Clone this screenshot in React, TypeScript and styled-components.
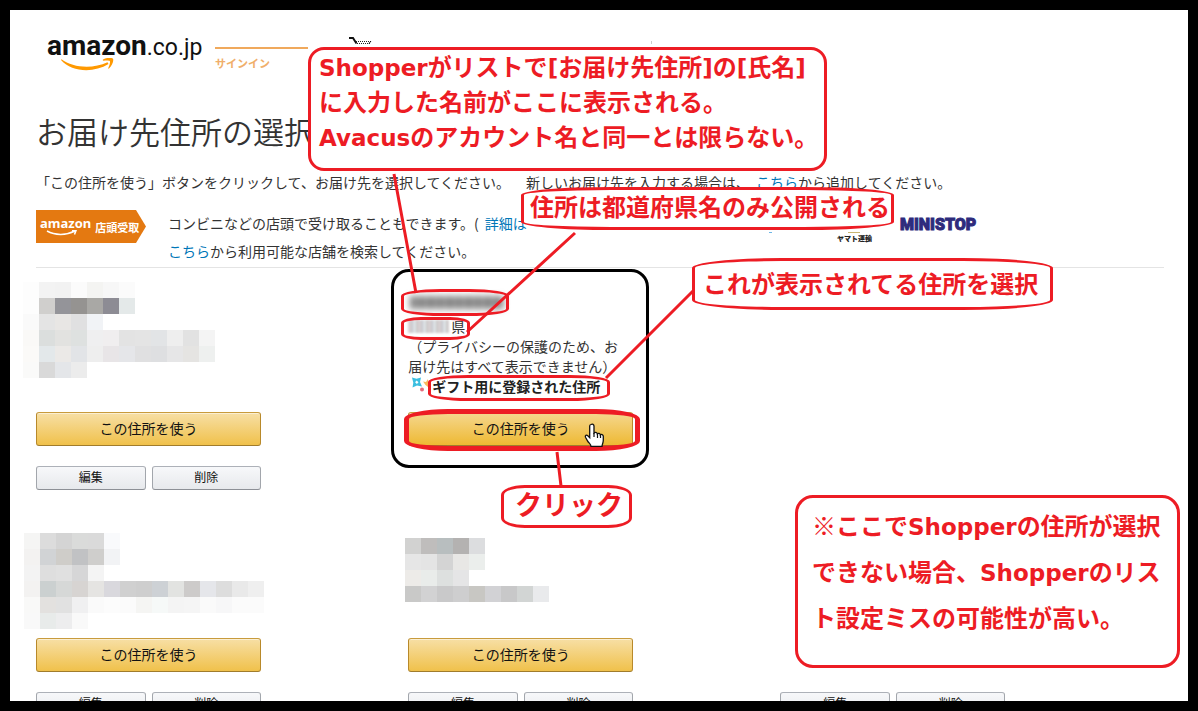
import React from 'react';
import styled, { createGlobalStyle } from 'styled-components';

const RED = '#ed1c24';

const GlobalStyle = createGlobalStyle`
  *, *::before, *::after { box-sizing: border-box; }
  body {
    margin: 0;
    background: #000;
    color: #333;
    font: 400 14px/20px "Noto Sans CJK JP", sans-serif;
  }
  h1, p { margin: 0; }
  button { font: inherit; }
`;

const Page = styled.div`
  position: relative;
  height: 100vh;
  padding: 10px;
  overflow: hidden;
  background: #000;
`;

const Sheet = styled.main`
  height: 100%;
  padding: 0 24px 0 26px;
  overflow: hidden;
  background: #fff;
`;

const Header = styled.header`
  display: flex;
  align-items: flex-start;
  height: 98px;
  padding: 20px 0 0 11px;
`;

const Logo = styled.a`
  display: flex;
  flex-direction: column;
  width: 156px;
  color: #111;
  text-decoration: none;
  white-space: nowrap;
`;

const LogoText = styled.span`
  font: 23px/32px Roboto, sans-serif;
  b { font-size: 28px; }
`;

const Smile = styled.svg`
  display: block;
  margin: -6px 0 0 14px;
`;

const SignInStep = styled.div`
  width: 93px;
  margin: 17px 40px 0 12px;
  padding-top: 4px;
  border-top: 2px solid #f0a95c;
  color: #f0ae6a;
  font-size: 11px;
  font-weight: 700;
`;

const CartIcon = styled.svg`
  margin-top: 7px;
`;

const Tick = styled.span`
  width: 1px;
  height: 3px;
  margin: 11px 0 0 279px;
  background: #ccc;
`;

const Title = styled.h1`
  font-size: 31px;
  line-height: 46px;
  font-weight: 350;
  white-space: nowrap;
`;

const Lead = styled.p`
  display: flex;
  gap: 16px;
  margin: 18px 0;
  white-space: nowrap;
`;

const TextLink = styled.a<{ $spaced?: boolean }>`
  padding-left: ${(p) => (p.$spaced ? 6 : 0)}px;
  color: #0077b8;
  text-decoration: none;
`;

const Pickup = styled.section`
  display: grid;
  grid-template-columns: 132px 600px 1fr;
  height: 58px;
  border-bottom: 1px solid #e4e4e4;
`;

const Badge = styled.div`
  display: flex;
  align-items: center;
  gap: 4px;
  width: 110px;
  height: 33px;
  padding-left: 4px;
  background: #e47911;
  clip-path: polygon(0 0, 100px 0, 100% 50%, 100px 100%, 0 100%);
  color: #fff;
  font-size: 11px;
  font-weight: 700;
  white-space: nowrap;
`;

const BadgeLogo = styled.span`
  display: flex;
  flex-direction: column;
  font: 700 13px/13px "Noto Sans", sans-serif;
  svg { display: block; margin-left: 6px; }
`;

const PickupText = styled.p`
  margin-top: -1px;
  line-height: 28px;
`;

const Brands = styled.div`
  display: flex;
  align-items: flex-start;
`;

const BlueMark = styled.span`
  width: 3px;
  height: 1px;
  margin: 22px 65px 0 1px;
  background: #6db6e6;
`;

const Yamato = styled.span`
  width: 63px;
  margin-top: 22px;
  color: #222;
  font-size: 7px;
  line-height: 10px;
  font-weight: 900;
  svg { display: block; margin-left: 11px; }
`;

const Ministop = styled.span`
  margin-top: 5px;
  color: #2e2b7c;
  font: 900 16px/20px Roboto, "Liberation Sans", sans-serif;
  -webkit-text-stroke: 1px #2e2b7c;
`;

const Cards = styled.section`
  display: grid;
  grid-template-columns: repeat(3, 33%);
  grid-auto-rows: 226px;
`;

const Card = styled.article`
  display: flex;
  flex-direction: column;
  width: 225px;
`;

const Address = styled.div`
  height: 144px;
  flex: none;
  white-space: nowrap;
`;

const ButtonSpace = styled.div`
  flex: none;
  height: 34px;
`;

const PrimaryButton = styled.button<{ $hover?: boolean }>`
  flex: none;
  height: 34px;
  padding: 0 0 2px;
  border: 1px solid;
  border-color: #c89b3c #b8892a #a07c2c;
  border-radius: 3px;
  background: ${(p) =>
    p.$hover
      ? 'linear-gradient(#f5d78e, #eeb933)'
      : 'linear-gradient(#f7dfa5, #f0c14b)'};
  box-shadow: inset 0 1px 0 rgba(255, 255, 255, 0.5);
  color: #111;
  cursor: pointer;
`;

const ButtonPair = styled.div`
  display: grid;
  grid-template-columns: 1fr 1fr;
  gap: 6px;
  margin-top: 20px;
`;

const SmallButton = styled.button`
  height: 24px;
  padding: 0 0 2px;
  border: 1px solid;
  border-color: #adb1b8 #a2a6ac #8d9096;
  border-radius: 3px;
  background: linear-gradient(#f7f8fa, #e7e9ec);
  color: #111;
  font-size: 12px;
  line-height: 20px;
  cursor: pointer;
`;

const MosaicArt = styled.svg<{ $top: number; $left: number }>`
  display: block;
  margin: ${(p) => p.$top}px 0 0 ${(p) => -p.$left}px;
`;

const HiddenName = styled.div`
  width: 94px;
  height: 13px;
  margin: 28px 0 7px 2px;
  background: repeating-linear-gradient(90deg, #777 0 5px, #aaa 5px 9px, #666 9px 12px, #999 12px 19px);
  filter: blur(3px);
`;

const Prefecture = styled.div`
  display: flex;
  align-items: center;
  gap: 2px;
`;

const HiddenPrefecture = styled.span`
  width: 41px;
  height: 13px;
  background: repeating-linear-gradient(90deg, #d8d0d2 0 3px, #c8c8cd 3px 5px, #dde2e6 5px 8px, #ccc9c9 8px 10px);
  filter: blur(1px);
`;

const GiftLine = styled.div`
  display: flex;
  align-items: center;
  color: #222;
  font-weight: 700;
  svg { flex: none; }
`;

const Overlay = styled.div`
  position: absolute;
  inset: 0;
  pointer-events: none;
`;

const Outline = styled.div<{
  $x: number; $y: number; $w: number; $h: number;
  $r: string; $line?: number; $color?: string; $fill?: boolean;
}>`
  position: absolute;
  left: ${(p) => p.$x}px;
  top: ${(p) => p.$y}px;
  width: ${(p) => p.$w}px;
  height: ${(p) => p.$h}px;
  border: ${(p) => p.$line ?? 3}px solid ${(p) => p.$color ?? RED};
  border-radius: ${(p) => p.$r};
  background: ${(p) => (p.$fill ? '#fff' : 'transparent')};
`;

const Note = styled(Outline)<{ $lh: number; $pad: string; $size?: number }>`
  padding: ${(p) => p.$pad};
  color: ${RED};
  font-size: ${(p) => p.$size ?? 24}px;
  line-height: ${(p) => p.$lh}px;
  font-weight: 700;
  white-space: nowrap;
  p { margin-top: -2px; }
`;

const Latin = styled.span`
  font-family: "DejaVu Sans", sans-serif;
  font-size: 23px;
  line-height: 1;
`;

const Pointers = styled.svg`
  position: absolute;
  inset: 0;
  width: 100%;
  height: 100%;
`;

function Mosaic({ rows, top, left }: { rows: string[]; top: number; left: number }) {
  const cells = rows.map((r) => r.split(' '));
  const cols = Math.max(...cells.map((r) => r.length));
  return (
    <MosaicArt $top={top} $left={left} width={cols * 16} height={rows.length * 16} shapeRendering="crispEdges" aria-hidden="true">
      {cells.map((r, y) =>
        r.map((c, x) => <rect key={`${x}-${y}`} x={x * 16} y={y * 16} width="16" height="16" fill={`#${c}`} />),
      )}
    </MosaicArt>
  );
}

const mosaicA = [
  'fdfdfd f3f3f3 f2f2f2 fbfbfb f4f4f2 f7f7f7 fbfbfb',
  'fdfdfd d0cfcd 949499 959391 a9a8a5 8d8c94 e4e9e9',
  'fafafa e4e4e4 e8e6e4 e0e0e1 f1f3f6',
  'faf9f7 dbdedd e2e2e0 dee1e0 efeff0 f0eeef e3e3e3 e4e4e4 e2e4e6 eeeeee e2e2e2 f4f4f4',
  'fbfaf8 e3e8ea ebe9e7 e2e4e7 eeeeee e8e5e7 e5e6e9 e0e0e1 dedfe1 e6e6e7 e5e4e2 eef0ef',
  'fafaf9 d9d9d9 e4e6e9 ececec',
];
const mosaicB = [
  'f5f5f4 dcdcdc d4d4d4 dadbda dadada f9fafc',
  'f3f2f1 d1d3d5 cfcdc9 c1c2c4 cfcecc f2f3f5',
  'f3f3f3 dedede e0e0e0 d6d6d7 f4f4f4',
  'f3f2f1 cbd0d0 d6d8d7 d7d4d2 e5e4e2 d9d8dd d0d0d0 cecece cdd1d5 e2e3e1 cdcbca e5e6ea dddddd e9e9e9 efefef',
  'f9f9f8 e3e1df e1e1e1 f0f0f1 fafafa fcfcfc fbfbfb f5f5f3 f6f9f8 f4f4f4 f5f5f5 fafafa f7f7f8 fbfbfb fbfbfb',
  'f9f9f9 e8ebea ededee f9f9f9',
];
const mosaicC = [
  'd2d2d1 bfbdbc b8bebf b4b2b1 dcdddf',
  'e6e6e6 e4e4e4 d4d4d4 e8e7e5 ebeeec',
  'edebe8 e9ecea dde0df e5e5e6',
  'c9c9c8 d2d2d3 c9c9ca cececf c8c7c3 d2d2d5 c8c8c9 d2d5d4 e9eaec',
];

const EditDelete = () => (
  <ButtonPair>
    <SmallButton type="button">編集</SmallButton>
    <SmallButton type="button">削除</SmallButton>
  </ButtonPair>
);

export default function App() {
  return (
    <Page lang="ja">
      <GlobalStyle />
      <Sheet>
        <Header>
          <Logo href="#">
            <LogoText><b>amazon</b>.co.jp</LogoText>
            <Smile width="56" height="14" viewBox="0 0 56 14" aria-hidden="true">
              <path d="M.5 1.200C12 10 32 11 46.500 4.200l1 1.800C33 15 11 14.500 0 2z" fill="#f90" />
              <path d="M42 1.500C46-.8 51-.5 52 .8c1 1.700-.8 7-4 9.700-.5.400-.9.100-.7-.4 1-2.300 2.300-6 1.500-7-.8-1-4.400-.5-6.300-.4-.8 0-.9-.8-.5-1.200z" fill="#f90" />
            </Smile>
          </Logo>
          <SignInStep>サインイン</SignInStep>
          <CartIcon width="24" height="8" viewBox="0 0 24 8" aria-hidden="true">
            <path d="M1 1h4l3.500 5.500" fill="none" stroke="#111" strokeWidth="2" />
            <path d="M8 4.500h15M9 6.500h13" stroke="#222" strokeDasharray="1 1" />
            <path d="M21 6.500l2-2.500" stroke="#111" />
          </CartIcon>
          <Tick />
        </Header>
        <Title>お届け先住所の選択</Title>
        <Lead>
          <span>「この住所を使う」ボタンをクリックして、お届け先を選択してください。</span>
          <span>新しいお届け先を入力する場合は、<TextLink href="#" $spaced>こちら</TextLink>から追加してください。</span>
        </Lead>
        <Pickup>
          <Badge>
            <BadgeLogo>
              amazon
              <svg width="34" height="6" viewBox="0 0 34 6" aria-hidden="true">
                <path d="M1 1c8 4.500 19 4.500 28 0M26 .8l4-.2-1.500 4" fill="none" stroke="#fff" strokeWidth="1.500" />
              </svg>
            </BadgeLogo>
            店頭受取
          </Badge>
          <PickupText>
            コンビニなどの店頭で受け取ることもできます。(<TextLink href="#" $spaced>詳細は</TextLink>
            <br />
            <TextLink href="#">こちら</TextLink>から利用可能な店舗を検索してください。
          </PickupText>
          <Brands>
            <BlueMark />
            <Yamato>
              <svg width="12" height="1"><rect width="12" height="1" fill="#c9b673" /></svg>
              ヤマト運輸
            </Yamato>
            <Ministop>MINISTOP</Ministop>
          </Brands>
        </Pickup>
        <Cards>
          <Card>
            <Address><Mosaic rows={mosaicA} top={14} left={13} /></Address>
            <PrimaryButton type="button">この住所を使う</PrimaryButton>
            <EditDelete />
          </Card>
          <Card>
            <Address>
              <HiddenName />
              <Prefecture><HiddenPrefecture />県</Prefecture>
              <p>（プライバシーの保護のため、お<br />届け先はすべて表示できません）</p>
              <GiftLine>
                <svg width="24" height="20" viewBox="0 0 24 20" aria-hidden="true">
                  <path d="M4 1.500l4.500 1.300L13 1.500l-1 4.500 2 4.500-5-1-4.500 2 .8-4.700z" fill="#3cbfe0" />
                  <path d="M8.700 4.500l1.800 1.700-1.600 1.800-1.800-1.700z" fill="#fff" />
                  <circle cx="14" cy="13.500" r="2" fill="#e56b7c" />
                  <path d="M15 5.500l3 .5 2-3v8l-2.500-2z" fill="#f9b960" />
                </svg>
                ギフト用に登録された住所
              </GiftLine>
            </Address>
            <PrimaryButton type="button" $hover>この住所を使う</PrimaryButton>
          </Card>
          <span />
          <Card>
            <Address><Mosaic rows={mosaicB} top={39} left={12} /></Address>
            <PrimaryButton type="button">この住所を使う</PrimaryButton>
            <EditDelete />
          </Card>
          <Card>
            <Address><Mosaic rows={mosaicC} top={44} left={3} /></Address>
            <PrimaryButton type="button">この住所を使う</PrimaryButton>
            <EditDelete />
          </Card>
          <Card>
            <Address />
            <ButtonSpace />
            <EditDelete />
          </Card>
        </Cards>
      </Sheet>
      <Overlay>
        <Outline $x={391} $y={269} $w={258} $h={199} $r="18px" $color="#000" />
        <Outline $x={401} $y={289} $w={108} $h={27} $r="40px / 7px" />
        <Outline $x={401} $y={317} $w={69} $h={23} $r="20px / 6px" />
        <Outline $x={428} $y={375} $w={182} $h={26} $r="40px / 7px" />
        <Outline $x={404} $y={409} $w={236} $h={42} $r="44px / 10px" $line={5} />
        <Note $x={308} $y={47} $w={519} $h={124} $r="16px" $fill $lh={35} $pad="0 8px">
          <p>
            <Latin>Shopper</Latin>がリストで<Latin>[</Latin>お届け先住所<Latin>]</Latin>の<Latin>[</Latin>氏名<Latin>]</Latin>
            <br />に入力した名前がここに表示される。
            <br /><Latin>Avacus</Latin>のアカウント名と同一とは限らない。
          </p>
        </Note>
        <Note $x={521} $y={187} $w={373} $h={43} $r="90px / 8px" $fill $lh={36} $pad="0 6px">
          <p>住所は都道府県名のみ公開される</p>
        </Note>
        <Note $x={692} $y={258} $w={361} $h={52} $r="90px / 10px" $fill $lh={46} $pad="1px 8px">
          <p>これが表示されてる住所を選択</p>
        </Note>
        <Note $x={501} $y={485} $w={131} $h={43} $r="24px / 10px" $fill $lh={36} $pad="0 11px" $size={27}>
          <p>クリック</p>
        </Note>
        <Note $x={795} $y={495} $w={385} $h={173} $r="18px" $fill $lh={46} $pad="6px 14px">
          <p>
            ※ここで<Latin>Shopper</Latin>の住所が選択
            <br />できない場合、<Latin>Shopper</Latin>のリス
            <br />ト設定ミスの可能性が高い。
          </p>
        </Note>
        <Pointers aria-hidden="true">
          <path d="M394 174L416 293M575 233L467 332M693 291L606 378M557 452L561 486" fill="none" stroke={RED} strokeWidth="3" />
          <path
            d="M591 424.500c1.500-1 3 0 3 1.500v7c1-1 3-.7 3.300.8 1-.9 2.800-.5 3 1 1-.8 3-.2 3 1.500v4c0 3-1.300 4-1.300 6h-11c0-2-2-3-3.500-5.500l-2-3.500c-.8-1.700 1-2.800 2.300-1.600l1.900 1.900V426c0-.7.400-1.200 1.300-1.500z"
            fill="#fff" stroke="#111" strokeWidth="1.300"
          />
          <path d="M594 433v4M597.500 434v4M600.500 435v3" stroke="#111" strokeWidth="1.200" />
        </Pointers>
      </Overlay>
    </Page>
  );
}
